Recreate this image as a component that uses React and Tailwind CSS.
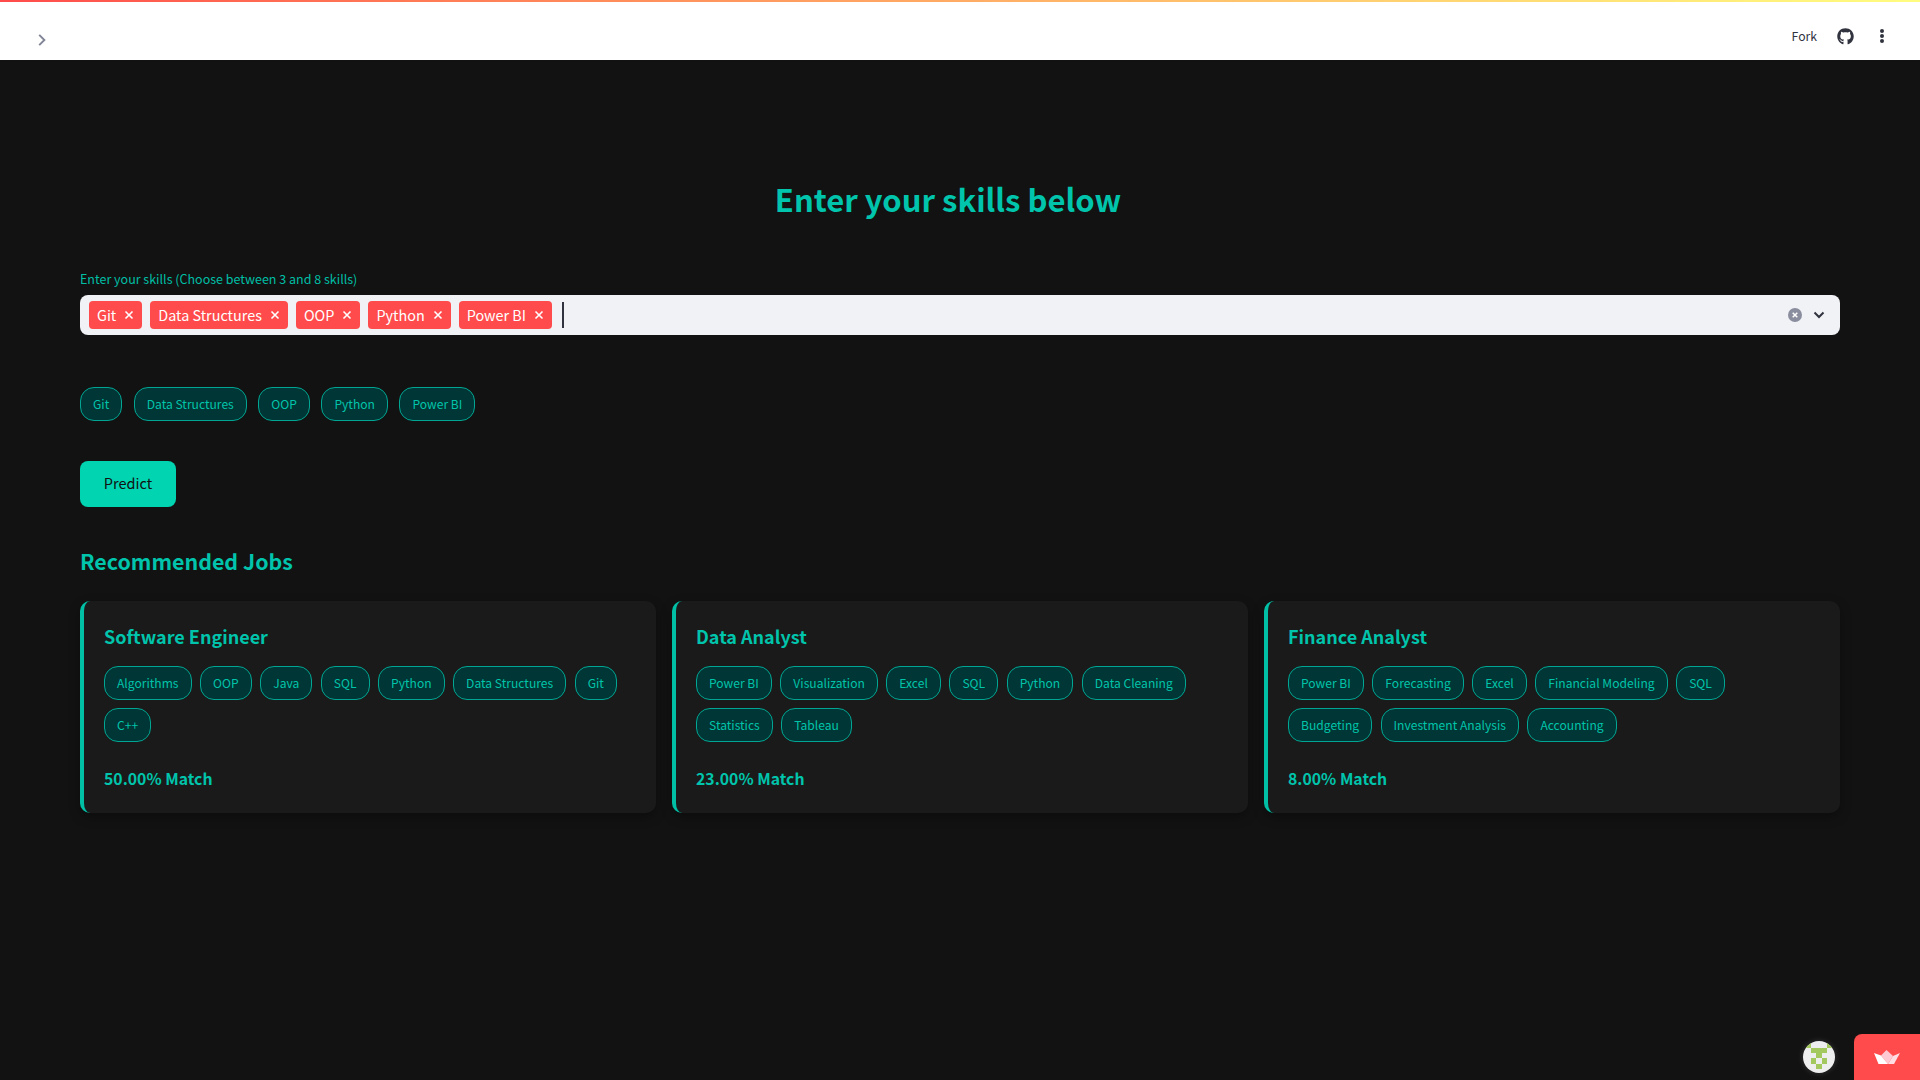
import { FaGithub } from "react-icons/fa";

const selected = ["Git", "Data Structures", "OOP", "Python", "Power BI"];

const jobs = [
  {
    title: "Software Engineer",
    skills: ["Algorithms", "OOP", "Java", "SQL", "Python", "Data Structures", "Git", "C++"],
    match: "50.00% Match",
  },
  {
    title: "Data Analyst",
    skills: ["Power BI", "Visualization", "Excel", "SQL", "Python", "Data Cleaning", "Statistics", "Tableau"],
    match: "23.00% Match",
  },
  {
    title: "Finance Analyst",
    skills: ["Power BI", "Forecasting", "Excel", "Financial Modeling", "SQL", "Budgeting", "Investment Analysis", "Accounting"],
    match: "8.00% Match",
  },
];

function Chip({ label }) {
  return (
    <span className="flex h-[33.6px] items-center rounded-[14px] border border-[#00a693] bg-[#003635] px-[12px] text-[12.1px] leading-none text-[#00c4aa]">
      {label}
    </span>
  );
}

function SelectTag({ label }) {
  return (
    <span className="flex h-7 items-center rounded-[4px] bg-[#ff4b4b] pl-2 pr-[6px] text-[14.4px] leading-none text-white">
      {label}
      <svg className="ml-[6px] h-[14px] w-[14px]" viewBox="0 0 14 14" fill="none" stroke="white" strokeWidth="1.6">
        <path d="M3.5 3.5l7 7M10.5 3.5l-7 7" />
      </svg>
    </span>
  );
}

function JobCard({ job }) {
  return (
    <div className="h-[212px] rounded-[10px] border-l-4 border-[#00bfa5] bg-[#1a1a1a] px-5 pt-[19px] shadow-[0_4px_12px_rgba(0,0,0,0.3)]">
      <h3 className="h-[32px] text-[18px] font-semibold leading-[32px] text-[#00c4ab]">{job.title}</h3>
      <div className="mt-[14.5px] flex flex-wrap gap-x-[8.5px] gap-y-[8.4px] pr-[8px]">
        {job.skills.map((s) => (
          <Chip key={s} label={s} />
        ))}
      </div>
      <p className="mt-[25.5px] text-[15.8px] font-bold leading-[24px] text-[#00c4ab]">{job.match}</p>
    </div>
  );
}

function Avatar() {
  const g = "#a3c95e";
  return (
    <svg className="h-8 w-8" viewBox="0 0 100 100" shapeRendering="crispEdges">
      <defs>
        <clipPath id="av">
          <circle cx="50" cy="50" r="50" />
        </clipPath>
      </defs>
      <g clipPath="url(#av)">
        <rect width="100" height="100" fill="#eeeeee" />
        <rect x="0" y="0" width="24" height="23" fill={g} />
        <rect x="76" y="0" width="24" height="23" fill={g} />
        <rect x="24" y="23" width="52" height="14" fill={g} />
        <rect x="40" y="37" width="20" height="17" fill={g} />
        <rect x="24" y="54" width="16" height="17" fill={g} />
        <rect x="60" y="54" width="16" height="17" fill={g} />
        <rect x="40" y="71" width="20" height="18" fill={g} />
      </g>
    </svg>
  );
}

export default function App() {
  return (
    <div
      className="relative flex h-screen flex-col overflow-hidden bg-[#121212]"
      style={{ fontFamily: '"Noto Sans CJK SC", "Noto Sans", sans-serif' }}
    >
      <header className="h-[60px] shrink-0 bg-white">
        <div className="h-[2px] bg-gradient-to-r from-[#ff4b4b] to-[#fffd80]" />
        <div className="flex h-[58px] justify-between pl-[38px] pr-[36px]">
          <svg className="mt-[32px] h-[12px] w-[8px]" viewBox="0 0 8 12" fill="none" stroke="#808495" strokeWidth="1.9">
            <path d="M1.2 0.8L6.4 6l-5.2 5.2" />
          </svg>
          <div className="mt-[25px] flex h-[18px] items-center text-[#31333f]">
            <span className="text-[12.2px] leading-none">Fork</span>
            <FaGithub className="ml-[20px] text-[17px]" />
            <svg className="ml-[26px] h-[14px] w-[4px]" viewBox="0 0 4 14" fill="#31333f">
              <circle cx="2" cy="2" r="2" />
              <circle cx="2" cy="7" r="2" />
              <circle cx="2" cy="12" r="2" />
            </svg>
          </div>
        </div>
      </header>

      <main className="px-20">
        <h1 className="mt-[113px] h-[52px] pr-[24px] text-center text-[31px] font-semibold leading-[52px] text-[#00c4ab]">
          Enter your skills below
        </h1>
        <label className="mt-[44px] block h-5 text-[12.5px] leading-5 text-[#00bfa5]">
          Enter your skills (Choose between 3 and 8 skills)
        </label>
        <div className="mt-[6px] flex h-10 items-center rounded-lg bg-[#f0f2f6] pl-[9px] pr-[15px]">
          <div className="flex items-center gap-2">
            {selected.map((s) => (
              <SelectTag key={s} label={s} />
            ))}
          </div>
          <span className="ml-[10px] h-[26px] w-[2px] bg-[#31333f]" />
          <svg className="ml-auto h-[14px] w-[14px]" viewBox="0 0 14 14">
            <circle cx="7" cy="7" r="7" fill="#8a8d9e" />
            <path d="M4.7 4.7l4.6 4.6M9.3 4.7l-4.6 4.6" stroke="white" strokeWidth="1.5" />
          </svg>
          <svg className="ml-[11px] h-[10px] w-[12px]" viewBox="0 0 12 10" fill="none" stroke="#31333f" strokeWidth="2">
            <path d="M1.5 2.5L6 7l4.5-4.5" />
          </svg>
        </div>

        <div className="mt-[52px] flex gap-x-[11.5px]">
          {selected.map((s) => (
            <Chip key={s} label={s} />
          ))}
        </div>

        <button className="mt-[40px] flex h-[46px] w-[96px] items-center justify-center rounded-lg bg-[#00d4b1] text-[14.5px] leading-none text-[#111111]">
          Predict
        </button>

        <h2 className="mt-[36px] h-[36px] text-[21.4px] font-bold leading-[36px] text-[#00c4ab]">Recommended Jobs</h2>

        <div className="mt-[22px] grid grid-cols-3 gap-4">
          {jobs.map((job) => (
            <JobCard key={job.title} job={job} />
          ))}
        </div>
      </main>

      {/* bottom right viewer badges */}
      <div className="absolute bottom-0 right-0 flex items-end">
        <div className="mb-[7px] mr-[19px] rounded-full shadow-[0_0_6px_rgba(255,255,255,0.15)]">
          <Avatar />
        </div>
        <div className="flex h-[46px] w-[66px] items-center justify-center rounded-tl-lg bg-[#ff4b4b]">
          <svg className="h-[14px] w-[26px]" viewBox="0 0 26 14">
            <path d="M7 5.5L12.5 0 19 6l-5 8z" fill="#ffc9d3" />
            <path d="M19 6l7-3-6 11h-6z" fill="#ffdde3" />
            <path d="M0 3l7 2.5L14 14H4.5z" fill="#ffffff" />
          </svg>
        </div>
      </div>
    </div>
  );
}
